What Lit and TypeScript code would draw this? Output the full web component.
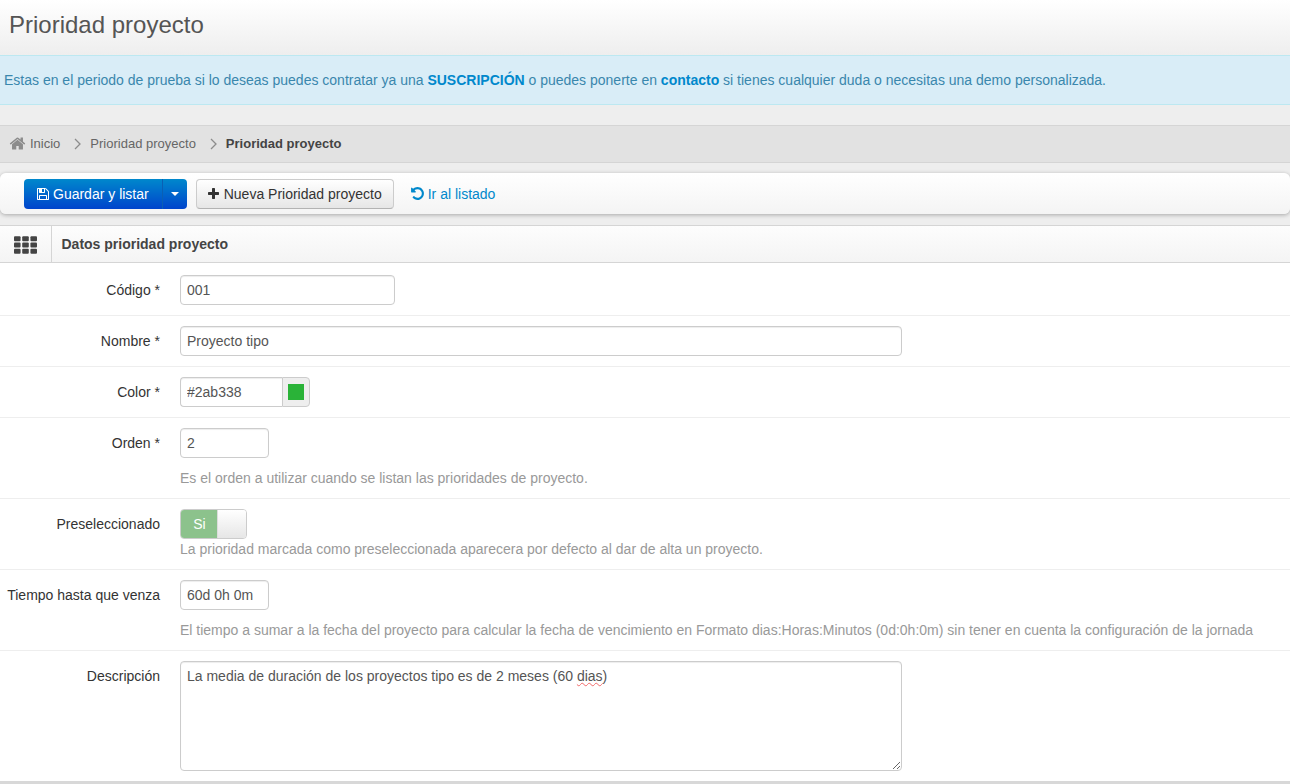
import { LitElement, html, css, svg } from "lit";
import { customElement } from "lit/decorators.js";

const ic = (vb: string, d: string, cls: string) =>
  html`<svg class=${cls} viewBox=${vb} fill="currentColor"><path d=${d}></path></svg>`;
const HOME = "M1472 992v480q0 26-19 45t-45 19h-384v-384h-256v384h-384q-26 0-45-19t-19-45v-480q0-1 .5-3t.5-3l575-474 575 474q1 2 1 6zm223-69l-62 74q-8 9-21 11h-3q-13 0-21-7l-692-577-692 577q-12 8-24 7-13-2-21-11l-62-74q-8-10-7-23.5t11-21.5l719-599q32-26 76-26t76 26l244 204v-195q0-14 9-23t23-9h192q14 0 23 9t9 23v408l219 182q10 8 11 21.5t-7 23.5z";
const SAVE = "M384 1536h768v-384h-768v384zm896 0h128v-896q0-14-10-38.5t-20-34.5l-281-281q-10-10-34-20t-39-10v416q0 40-28 68t-68 28h-576q-40 0-68-28t-28-68v-416h-128v1280h128v-416q0-40 28-68t68-28h832q40 0 68 28t28 68v416zm-384-928v-320q0-13-9.5-22.5t-22.5-9.5h-192q-13 0-22.5 9.5t-9.5 22.5v320q0 13 9.5 22.5t22.5 9.5h192q13 0 22.5-9.5t9.5-22.5zm640 32v928q0 40-28 68t-68 28h-1344q-40 0-68-28t-28-68v-1344q0-40 28-68t68-28h928q40 0 88 20t76 48l280 280q28 28 48 76t20 88z";
const PLUS = "M1408 736v192q0 40-28 68t-68 28h-416v416q0 40-28 68t-68 28h-192q-40 0-68-28t-28-68v-416h-416q-40 0-68-28t-28-68v-192q0-40 28-68t68-28h416v-416q0-40 28-68t68-28h192q40 0 68 28t28 68v416h416q40 0 68 28t28 68z";
const UNDO = "M1536 896q0 156-61 298t-164 245-245 164-298 61q-172 0-327-72.5t-264-204.5q-7-10-6.5-22.5t8.5-20.5l137-138q10-9 25-9 16 2 23 12 73 95 179 147t225 52q104 0 198.5-40.5t163.5-109.5 109.5-163.5 40.5-198.5-40.5-198.5-109.5-163.5-163.5-109.5-198.5-40.5q-98 0-188 35.5t-160 101.5l137 138q31 30 14 69-17 40-59 40h-448q-26 0-45-19t-19-45v-448q0-42 40-59 39-17 69 14l130 129q107-101 244.5-156.5t284.5-55.5q156 0 298 61t245 164 164 245 61 298z";

const chevron = html`<svg class="sep" viewBox="0 0 7 12" fill="none" stroke="#8c8c8c" stroke-width="1.3"><path d="M1 1l5 5-5 5"></path></svg>`;

const gridCells = [0, 1, 2].flatMap((r) => [0, 1, 2].map((c) =>
  svg`<rect x=${c * 8.5} y=${r * 6.5} width="6.8" height="5" rx="1"></rect>`));

@customElement("app-root")
export class AppRoot extends LitElement {
  static styles = css`
    :host { display: block; width: 1290px; height: 784px; overflow: hidden; background: #eee; font-family: "Liberation Sans", Arial, sans-serif; font-size: 14px; color: #333; }
    .title { height: 55px; box-sizing: border-box; background: linear-gradient(#fff, #eee); padding: 10px 0 0 9px; }
    .title h1 { margin: 0; font-size: 24px; line-height: 30px; font-weight: 400; color: #555; }
    .alert { height: 50px; box-sizing: border-box; display: flex; align-items: center; padding-left: 4px; background: #d9edf7; border-top: 1px solid #bce8f1; border-bottom: 1px solid #bce8f1; color: #3a87ad; white-space: nowrap; }
    .alert b { color: #0088cc; font-weight: 700; margin: 0; }
    .crumbs { margin-top: 20px; height: 38px; box-sizing: border-box; display: flex; align-items: center; padding: 0 0 2px 9px; background: #e2e2e2; border-top: 1px solid #d5d5d5; border-bottom: 1px solid #d5d5d5; font-size: 13px; color: #666; }
    .crumbs .home { width: 17px; height: 17px; color: #8c8c8c; margin-right: 4px; }
    .crumbs .sep { width: 7px; height: 12px; margin: 2px 9px 0 14px; }
    .crumbs b { color: #444; }
    .toolbar { margin-top: 10px; height: 41px; box-sizing: border-box; display: flex; align-items: center; padding-left: 24px; background: linear-gradient(#fff, #f4f4f4); border-radius: 6px; box-shadow: 0 1px 4px rgba(0,0,0,.3); }
    .btn { height: 30px; box-sizing: border-box; display: inline-flex; align-items: center; font: inherit; }
    .primary { background: linear-gradient(#0088cc, #0044cc); color: #fff; border-radius: 4px; }
    .primary .main { display: flex; align-items: center; padding: 0 13px; height: 100%; border-right: 1px solid #0a5fb4; }
    .primary .caret { width: 0; height: 0; border-left: 4px solid transparent; border-right: 4px solid transparent; border-top: 4px solid #fff; margin: 0 8px; }
    .primary .save { width: 12px; height: 14px; margin-right: 4px; }
    .second { margin-left: 9px; padding: 0 11px; background: linear-gradient(#fff, #e6e6e6); border: 1px solid #ccc; border-bottom-color: #b3b3b3; border-radius: 4px; color: #333; }
    .second .plus { width: 11px; height: 14px; margin-right: 5px; }
    .link { margin-left: 17px; display: inline-flex; align-items: center; color: #0088cc; }
    .link .undo { width: 13px; height: 15px; margin-right: 4px; }
    .panel { margin-top: 11px; background: #fff; }
    .phead { height: 38px; box-sizing: border-box; display: flex; align-items: stretch; background: linear-gradient(#fdfdfd, #f4f4f4); border-top: 1px solid #d5d5d5; border-bottom: 1px solid #d5d5d5; }
    .phead .ico { width: 52px; box-sizing: border-box; border-right: 1px solid #d5d5d5; display: flex; align-items: center; justify-content: center; margin-bottom: -1px; padding-right: 1px; }
    .phead .ico svg { width: 23px; height: 18px; fill: #444; }
    .phead .t { padding-left: 9.5px; display: flex; align-items: center; font-weight: 700; color: #444; }
    .row { display: grid; grid-template-columns: 160px 1fr; column-gap: 20px; padding-top: 10px; box-sizing: border-box; border-bottom: 1px solid #eee; }
    .row label { text-align: right; line-height: 30px; white-space: nowrap; }
    .control { display: flex; flex-direction: column; align-items: flex-start; }
    input { height: 30px; box-sizing: border-box; border: 1px solid #ccc; border-radius: 4px; padding: 0 6px; font: inherit; color: #555; background: #fff; outline: none; box-shadow: inset 0 1px 1px rgba(0,0,0,.075); display: block; }
    .help { color: #999; white-space: nowrap; }
    .first { height: 53px; padding-top: 12px; }
    .h51 { height: 51px; }
    .h81 { height: 81px; }
    .h71 { height: 71px; }
    .w215 { width: 215px; }
    .w722 { width: 722px; }
    .w89 { width: 89px; }
    .mt12 { margin-top: 12px; }
    .mt2 { margin-top: 2px; }
    .color { display: flex; width: 130px; }
    .color input { width: 102px; border-radius: 4px 0 0 4px; border-right: 0; }
    .color .add { width: 28px; box-sizing: border-box; height: 30px; background: #eee; border: 1px solid #ccc; border-radius: 0 4px 4px 0; display: flex; align-items: center; justify-content: center; }
    .color .sw { width: 16px; height: 16px; background: #2ab338; }
    .toggle { display: flex; width: 67px; height: 30px; box-sizing: border-box; border-radius: 4px; overflow: hidden; border: 1px solid #ccc; }
    .toggle .on { width: 37px; box-sizing: border-box; padding-left: 2px; background: #8cc28c; color: #fff; display: flex; align-items: center; justify-content: center; margin: -1px 0 -1px -1px; }
    .toggle .off { flex: 1; background: linear-gradient(#fff, #e6e6e6); border-left: 1px solid #ddd; }
    .area { width: 722px; height: 110px; box-sizing: border-box; border: 1px solid #ccc; border-radius: 4px; padding: 6px; line-height: 17px; color: #555; overflow: auto; resize: both; background: #fff; box-shadow: inset 0 1px 1px rgba(0,0,0,.075); }
    .sp { text-decoration: underline wavy #f06a6a 1px; text-underline-offset: 1px; }
    .last { height: 130px; border-bottom: 0; }
    .bottom { height: 3px; background: #d8d8d8; }
  `;

  render() {
    return html`
      <div class="title"><h1>Prioridad proyecto</h1></div>
      <div class="alert"><span>Estas en el periodo de prueba si lo deseas puedes contratar ya una <b>SUSCRIPCIÓN</b> o puedes ponerte en <b>contacto</b> si tienes cualquier duda o necesitas una demo personalizada.</span></div>
      <div class="crumbs">
        ${ic("0 0 1792 1792", HOME, "home")}<span>Inicio</span>${chevron}<span>Prioridad proyecto</span>${chevron}<b>Prioridad proyecto</b>
      </div>
      <div class="toolbar">
        <div class="btn primary"><span class="main">${ic("0 0 1536 1792", SAVE, "save")}Guardar y listar</span><span class="caret"></span></div>
        <div class="btn second">${ic("0 0 1408 1792", PLUS, "plus")}Nueva Prioridad proyecto</div>
        <span class="link">${ic("0 0 1536 1792", UNDO, "undo")}Ir al listado</span>
      </div>
      <div class="panel">
        <div class="phead"><div class="ico"><svg viewBox="0 0 23.8 18">${gridCells}</svg></div><div class="t">Datos prioridad proyecto</div></div>
        <div class="row first"><label>Código *</label><div class="control"><input class="w215" value="001" /></div></div>
        <div class="row h51"><label>Nombre *</label><div class="control"><input class="w722" value="Proyecto tipo" /></div></div>
        <div class="row h51"><label>Color *</label><div class="control"><div class="color"><input value="#2ab338" /><span class="add"><span class="sw"></span></span></div></div></div>
        <div class="row h81"><label>Orden *</label><div class="control"><input class="w89" value="2" /><div class="help mt12">Es el orden a utilizar cuando se listan las prioridades de proyecto.</div></div></div>
        <div class="row h71"><label>Preseleccionado</label><div class="control"><div class="toggle"><span class="on">Si</span><span class="off"></span></div><div class="help mt2">La prioridad marcada como preseleccionada aparecera por defecto al dar de alta un proyecto.</div></div></div>
        <div class="row h81"><label>Tiempo hasta que venza</label><div class="control"><input class="w89" value="60d 0h 0m" /><div class="help mt12">El tiempo a sumar a la fecha del proyecto para calcular la fecha de vencimiento en Formato dias:Horas:Minutos (0d:0h:0m) sin tener en cuenta la configuración de la jornada</div></div></div>
        <div class="row last"><label>Descripción</label><div class="control"><div class="area">La media de duración de los proyectos tipo es de 2 meses (60 <span class="sp">dias</span>)</div></div></div>
      </div>
      <div class="bottom"></div>
    `;
  }
}
